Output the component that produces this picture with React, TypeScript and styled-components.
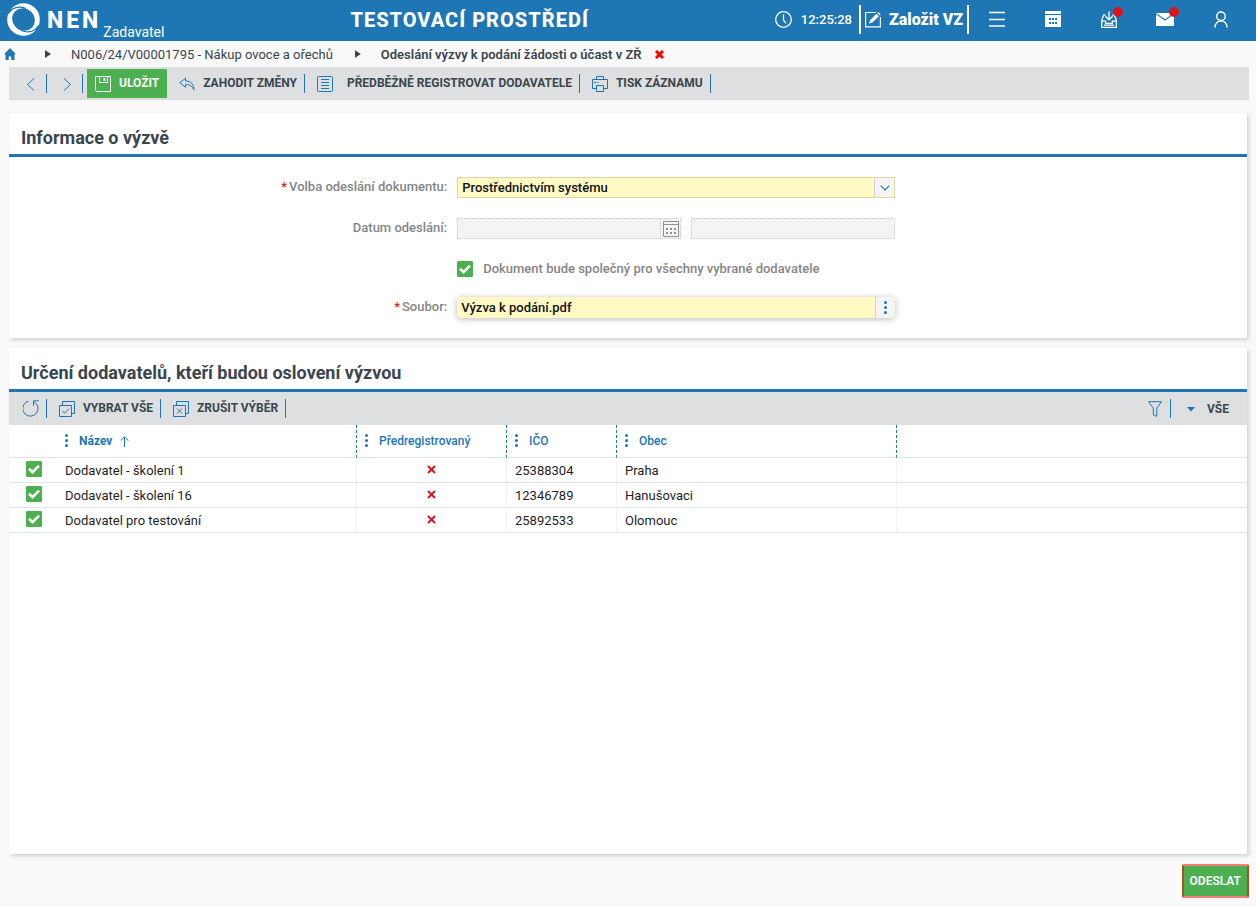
import React from "react";
import styled, { createGlobalStyle, css } from "styled-components";

const blue = "#1e76b5";
const ink = "#3a464e";
const green = "#4caf50";

const GlobalStyle = createGlobalStyle`
  * { box-sizing: border-box; }
  body { margin: 0; background: #f9f9f9; font-family: Roboto, "Liberation Sans", sans-serif; font-size: 13px; color: ${ink}; }
  button, input, select { font: inherit; color: inherit; }
  button { border: 0; background: none; padding: 0; cursor: pointer; }
  svg { display: block; flex: none; }
`;

const Page = styled.div`
  min-height: 100vh;
  display: flex;
  flex-direction: column;
`;

/* ---------- top bar ---------- */
const TopBar = styled.header`
  display: flex;
  align-items: center;
  height: 41px;
  padding: 0 7px;
  background: ${blue};
  color: #fff;
`;
const Brand = styled.a`
  display: flex;
  align-items: center;
  gap: 7px;
  height: 41px;
  padding-bottom: 3px;
  color: #fff;
  text-decoration: none;
`;
const BrandName = styled.span`
  font-size: 23px;
  line-height: 28px;
  font-weight: 800;
  letter-spacing: 3px;
  padding-top: 3px;
`;
const BrandRole = styled.span`
  align-self: flex-end;
  margin: 0 0 -3px -5px;
  font-size: 14px;
  line-height: 18px;
  font-weight: 400;
`;
const EnvTitle = styled.h1`
  flex: 1;
  margin: 0;
  padding-bottom: 2px;
  text-align: center;
  font-size: 20px;
  line-height: 24px;
  font-weight: 800;
  letter-spacing: 1px;
`;
const Clock = styled.div`
  display: flex;
  align-items: center;
  gap: 9px;
  padding: 0 7px 3px 0;
  font-weight: 500;
`;
const CreateButton = styled.button`
  display: flex;
  align-items: center;
  gap: 7px;
  height: 29px;
  margin-bottom: 2px;
  padding: 0 4px;
  border-left: 2px solid #fff;
  border-right: 2px solid #fff;
  font-size: 16px;
  font-weight: 900;
`;
const TopIcon = styled.button`
  position: relative;
  display: flex;
  align-items: center;
  justify-content: center;
  width: 56px;
  height: 38px;
  margin-bottom: 3px;
`;
const Badge = styled.span`
  position: absolute;
  top: 7px;
  right: 14px;
  width: 10px;
  height: 10px;
  border-radius: 50%;
  background: #d9161c;
`;

/* ---------- breadcrumbs ---------- */
const Crumbs = styled.nav`
  display: flex;
  align-items: center;
  height: 26px;
  padding: 0 4px;
  a { color: inherit; text-decoration: none; }
`;
const CrumbArrow = styled.span<{ $first?: boolean }>`
  width: 6px;
  height: 8px;
  margin: 0 20px 0 ${(p) => (p.$first ? 29 : 22)}px;
  background: ${ink};
  clip-path: polygon(0 0, 100% 50%, 0 100%);
`;
const CurrentCrumb = styled.span`
  font-weight: 600;
`;
const CloseCrumb = styled.button`
  margin-left: 13px;
`;

/* ---------- tool bars ---------- */
const Toolbar = styled.div<{ $page?: boolean }>`
  display: flex;
  align-items: center;
  height: 33px;
  padding-left: 2px;
  background: #dedfe0;
  ${(p) => p.$page && css`margin: 0 7px 13px 9px; box-shadow: inset 0 -1px #d8d9da;`}
`;
const ToolButton = styled.button<{ $gap?: number }>`
  display: flex;
  align-items: center;
  gap: ${(p) => p.$gap ?? 8}px;
  height: 29px;
  padding: 0 7px 0 12px;
  font-size: 12px;
  font-weight: 700;
  color: ${ink};
  svg { color: ${blue}; }
  span { padding-bottom: 2px; }
`;
const SaveButton = styled(ToolButton)`
  margin-left: 4px;
  padding: 0 8px;
  background: ${green};
  color: #fff;
  svg { color: #fff; }
`;
const Separator = styled.span`
  width: 1px;
  height: 19px;
  background: ${blue};
`;
const Spacer = styled.span`
  flex: 1;
`;
const ScopeButton = styled(ToolButton)`
  padding-right: 18px;
  span { padding-bottom: 0; }
`;

/* ---------- panels ---------- */
const Panel = styled.section<{ $grow?: boolean }>`
  margin: 0 9px 10px;
  background: #fff;
  box-shadow: 2px 2px 4px rgba(0, 0, 0, 0.16);
  ${(p) => p.$grow && css`flex: 1;`}
`;
const PanelTitle = styled.h2`
  margin: 0;
  padding: 13px 12px 4px;
  border-bottom: 3px solid ${blue};
  font-size: 18px;
  line-height: 24px;
  font-weight: 700;
`;

/* ---------- form ---------- */
const Form = styled.form`
  display: grid;
  grid-template-columns: 59fr 59fr 46fr;
  column-gap: 10px;
  row-gap: 20px;
  align-items: center;
  padding: 20px 0;
`;
const Label = styled.label`
  grid-column: 1;
  text-align: right;
  line-height: 18px;
  margin-bottom: 1px;
  font-weight: 500;
  color: #858585;
`;
const Required = styled.span`
  color: #e02020;
  margin-right: 2px;
`;
const Field = styled.div`
  grid-column: 2;
  display: flex;
`;
const SelectBox = styled(Field)`
  position: relative;
  height: 21px;
  border: 1px solid #dcd6a0;
  background: #fff9c4;
`;
const Select = styled.select`
  flex: 1;
  appearance: none;
  border: 0;
  padding: 0 24px 0 4px;
  background: transparent;
  font-weight: 500;
  color: #111;
`;
const SelectArrow = styled.span`
  position: absolute;
  top: 0;
  right: 0;
  bottom: 0;
  width: 20px;
  display: flex;
  align-items: center;
  justify-content: center;
  border-left: 1px solid #d0d4d8;
  background: #f4f4f4;
  color: ${blue};
  pointer-events: none;
`;
const DateFields = styled(Field)`
  gap: 10px;
`;
const DisabledBox = styled.div<{ $grow: number }>`
  flex: ${(p) => p.$grow} 1 0;
  min-width: 0;
  display: flex;
  height: 21px;
  border: 1px dotted #c8c8c8;
  background: #f4f4f4;
`;
const DisabledInput = styled.input`
  flex: 1;
  min-width: 0;
  border: 0;
  padding: 0 4px;
  background: transparent;
`;
const CalendarButton = styled.button`
  width: 20px;
  display: flex;
  align-items: center;
  justify-content: center;
  border-left: 1px dotted #c8c8c8;
  &:disabled { color: #909090; }
`;
const CheckField = styled(Field)`
  align-items: center;
  gap: 10px;
  height: 18px;
  padding-top: 2px;
  label { padding-bottom: 2px; font-weight: 500; color: #858585; }
`;
const FileBox = styled(Field)`
  height: 21px;
  border-radius: 4px;
  background: #fff9c4;
  box-shadow: 0 1px 6px rgba(0, 0, 0, 0.28);
  overflow: hidden;
`;
const FileInput = styled.input`
  flex: 1;
  min-width: 0;
  border: 0;
  padding: 0 4px;
  background: transparent;
  font-weight: 500;
  color: #111;
`;
const FileMenu = styled.button`
  width: 20px;
  display: flex;
  align-items: center;
  justify-content: center;
  border-left: 1px solid #d0d4d8;
  background: #f4f4f4;
  color: ${blue};
`;

/* ---------- tick box ---------- */
const TickWrap = styled.span`
  display: inline-grid;
  width: 16px;
  height: 16px;
  vertical-align: top;
  & > * { grid-area: 1 / 1; }
  svg { pointer-events: none; }
`;
const TickInput = styled.input`
  appearance: none;
  width: 16px;
  height: 16px;
  margin: 0;
  border-radius: 1px;
  border: 1px solid ${green};
  &:checked { background: ${green}; }
`;

/* ---------- table ---------- */
const Table = styled.table`
  width: 100%;
  table-layout: fixed;
  border-collapse: separate;
  border-spacing: 0;
  color: #1f1f1f;
`;
const HeadCell = styled.th<{ $line?: boolean; $bold?: boolean }>`
  height: 33px;
  padding: 0 8px 1px;
  text-align: left;
  font-size: 12px;
  font-weight: ${(p) => (p.$bold ? 700 : 500)};
  color: ${blue};
  border-bottom: 1px solid #dde7ea;
  border-right: ${(p) => (p.$line ? `1px dashed ${blue}` : 0)};
`;
const HeadLabel = styled.span`
  display: flex;
  align-items: center;
  svg:first-child { margin-right: 11px; }
  svg:last-child:not(:first-child) { margin: 2px 0 0 8px; }
`;
const Cell = styled.td<{ $line?: boolean; $center?: boolean }>`
  height: 25px;
  padding: 2px 8px 0;
  line-height: 22px;
  text-align: ${(p) => (p.$center ? "center" : "left")};
  border-bottom: 1px solid #dde7ea;
  border-right: ${(p) => (p.$line ? "1px dotted #dde7ea" : 0)};
  & > svg { margin: 0 auto 3px; }
`;
const CheckCell = styled(Cell)`
  padding: 3px 0 0 17px;
  line-height: 0;
  vertical-align: top;
`;

/* ---------- footer ---------- */
const Footer = styled.footer`
  display: flex;
  justify-content: flex-end;
  padding: 0 7px 9px;
`;
const SendButton = styled.button`
  height: 34px;
  padding: 0 6px 1px;
  border: 2px solid;
  border-color: #f87c7c #b0501f;
  border-radius: 2px;
  background: ${green};
  color: #fff;
  font-size: 12px;
  font-weight: 600;
`;

/* ---------- drawings ---------- */
const stroke = { fill: "none", stroke: "currentColor", strokeWidth: 1 } as const;

const Logo = () => (
  <svg width="33" height="33" viewBox="0 0 33 33" aria-hidden="true">
    <circle cx="16.5" cy="16.5" r="16.3" fill="#fff" />
    <ellipse cx="16.5" cy="16.5" rx="11.8" ry="10.8" transform="rotate(45 16.5 16.5)" fill={blue} />
    <path
      d="M1.2 10.5C5 4.8 11 2.6 19 5.4M31.8 22.5C28 28.2 22 30.4 14 27.6"
      fill="none"
      stroke={blue}
      strokeWidth="1.1"
    />
    <path d="M0 8L3.6 4.6L4.8 6.6L1.5 11ZM33 25L29.4 28.4L28.2 26.4L31.5 22Z" fill={blue} />
  </svg>
);
const ClockIcon = () => (
  <svg width="17" height="17" viewBox="0 0 17 17" {...stroke}>
    <circle cx="8.5" cy="8.5" r="7.8" strokeWidth="1.3" />
    <path d="M8.5 3.5V9L11 12.3" strokeWidth="1.3" />
  </svg>
);
const EditIcon = () => (
  <svg width="17" height="17" viewBox="0 0 17 17" {...stroke}>
    <path d="M11 1.5H.6V15.9H15.4V6" strokeWidth="1.2" />
    <path d="M4 12.5L5 9.2L11.5 2.7L14 5.2L7.4 11.6ZM12.3 1.9L13.3 1L15.7 3.4L14.8 4.4Z" fill="currentColor" stroke="none" />
  </svg>
);
const MenuIcon = () => (
  <svg width="16" height="16" viewBox="0 0 16 16" {...stroke}>
    <path d="M0 1.5H16M0 8.5H16M0 15H16" strokeWidth="1.6" />
  </svg>
);
const CalendarSolid = () => (
  <svg width="16" height="16" viewBox="0 0 16 16">
    <path d="M0 0H16V3H0ZM0 4H16V16H0Z" fill="#fff" />
    <path d="M4 7h2v2H4zM7 7h2v2H7zM10 7h2v2h-2zM4 11h2v2H4zM7 11h2v2H7zM10 11h2v2h-2z" fill={blue} />
  </svg>
);
const TrayIcon = () => (
  <svg width="16" height="17" viewBox="0 0 16 17" {...stroke} strokeWidth="1.3">
    <path d="M4.5 4H2.6L.7 9.5V16.3H15.3V9.5L13.4 4H11.5" />
    <path d="M.7 10.2H4.6V12.4H11.4V10.2H15.3M3 14.2H13M8 .5V8.5M4.4 5.2L8 8.8L11.6 5.2" />
  </svg>
);
const MailIcon = () => (
  <svg width="18" height="14" viewBox="0 0 18 14">
    <path d="M0 1H18V14H0Z" fill="#fff" />
    <path d="M0 1.6L9 8L18 1.6" fill="none" stroke={blue} strokeWidth="1.1" />
  </svg>
);
const UserIcon = () => (
  <svg width="14" height="17" viewBox="0 0 14 17" {...stroke} strokeWidth="1.5">
    <circle cx="7" cy="5.3" r="4.3" />
    <path d="M1 16.4C1.1 12.6 3.6 9.9 7 9.7C10.4 9.9 12.9 12.6 13 16.4" />
  </svg>
);
const HomeIcon = () => (
  <svg width="12" height="12" viewBox="0 0 12 12" fill={blue}>
    <path d="M6 0L12 6.2H10.5V12H7.3V8.5H4.7V12H1.5V6.2H0Z" />
  </svg>
);
const Cross = ({ size = 9, color = "#d9161c" }: { size?: number; color?: string }) => (
  <svg width={size} height={size} viewBox="0 0 9 9" fill="none" stroke={color} strokeWidth={color === "red" ? 3 : 2}>
    <path d="M1 1L8 8M8 1L1 8" />
  </svg>
);
const Chevron = ({ next }: { next?: boolean }) => (
  <svg width="16" height="16" viewBox="0 0 16 16" {...stroke}>
    <path d={next ? "M5 2.5L11.5 8.5L5 14.5" : "M11 2.5L4.5 8.5L11 14.5"} />
  </svg>
);
const SaveIcon = () => (
  <svg width="16" height="16" viewBox="0 0 16 16" {...stroke}>
    <path d="M.5 .5H15.5V15.5H1.8L.5 14.2ZM4.5 .5V6.5H12.5V.5" />
    <path d="M9.5 2v3" strokeWidth="2" />
  </svg>
);
const UndoIcon = () => (
  <svg width="16" height="16" viewBox="0 0 16 16" {...stroke}>
    <path d="M6.5 2.2L.8 6.7L6.5 11.2V8.5C10.5 8.4 13.3 10 14.8 13.7C15.3 9.3 12.5 5.2 6.5 4.9Z" />
  </svg>
);
const ListIcon = () => (
  <svg width="16" height="16" viewBox="0 0 16 16" {...stroke}>
    <rect x=".5" y=".5" width="15" height="15" rx="1" />
    <path d="M4 3.5H12M4 6.5H12M4 9.5H12M4 12.5H12" />
  </svg>
);
const PrintIcon = () => (
  <svg width="16" height="16" viewBox="0 0 16 16" {...stroke}>
    <path d="M4.5 3.5V.5H11.5V3.5M4.5 12.5H.5V3.5H15.5V12.5H11.5M4.5 9.5H11.5V15.5H4.5ZM2 6.5H4M5 6.5H6.5" />
  </svg>
);
const RefreshIcon = () => (
  <svg width="16" height="17" viewBox="0 0 16 17" {...stroke}>
    <path d="M5.5 1.2A7.6 7.6 0 1 0 13.6 4.2L10.6 1.2M10.5 6V.8H15.8" />
  </svg>
);
const StackIcon = ({ cross }: { cross?: boolean }) => (
  <svg width="16" height="16" viewBox="0 0 16 16" {...stroke}>
    <path d="M.5 4.5H12.5V15.5H.5ZM3.5 4V.5H15.5V12.5H13" />
    <path d={cross ? "M4 7.5L9 12.5M9 7.5L4 12.5" : "M3.3 9.8L5.6 12.2L10 7.7"} />
  </svg>
);
const FilterIcon = () => (
  <svg width="16" height="16" viewBox="0 0 16 16" {...stroke}>
    <path d="M1.5 .7H14.5L9.8 7.2V15.4L6.3 13.8V7.2Z" />
  </svg>
);
const DropIcon = () => (
  <svg width="16" height="16" viewBox="0 0 16 16" fill="currentColor">
    <path d="M4 6H12L8 10.5Z" />
  </svg>
);
const DownIcon = () => (
  <svg width="10" height="6" viewBox="0 0 10 6" {...stroke}>
    <path d="M.7 .7L5 5L9.3 .7" strokeWidth="1.2" />
  </svg>
);
const CalendarLine = () => (
  <svg width="16" height="16" viewBox="0 0 16 16" {...stroke}>
    <path d="M.5 .5H15.5V15.5H.5ZM.5 3.5H15.5" />
    <path d="M3 8h2M7 8h2M11 8h2M3 12h2M7 12h2M11 12h2" strokeWidth="2" />
  </svg>
);
const Dots = () => (
  <svg width="3" height="13" viewBox="0 0 3 13" fill="currentColor">
    <circle cx="1.5" cy="1.5" r="1.5" />
    <circle cx="1.5" cy="6.5" r="1.5" />
    <circle cx="1.5" cy="11.5" r="1.5" />
  </svg>
);
const SortIcon = () => (
  <svg width="9" height="11" viewBox="0 0 9 11" {...stroke}>
    <path d="M4.5 11V1M.7 4.6L4.5 .8L8.3 4.6" />
  </svg>
);

const Tick = (props: React.InputHTMLAttributes<HTMLInputElement>) => (
  <TickWrap>
    <TickInput type="checkbox" defaultChecked {...props} />
    <svg width="16" height="16" viewBox="0 0 16 16" fill="none" stroke="#fff" strokeWidth="2.6">
      <path d="M3 7.8L6.6 11.2L13 4.6" />
    </svg>
  </TickWrap>
);

const suppliers = [
  { name: "Dodavatel - školení 1", ico: "25388304", city: "Praha" },
  { name: "Dodavatel - školení 16", ico: "12346789", city: "Hanušovaci" },
  { name: "Dodavatel pro testování", ico: "25892533", city: "Olomouc" },
];

export default function App() {
  return (
    <Page>
      <GlobalStyle />
      <TopBar>
        <Brand href="#">
          <Logo />
          <BrandName>NEN</BrandName>
          <BrandRole>Zadavatel</BrandRole>
        </Brand>
        <EnvTitle>TESTOVACÍ PROSTŘEDÍ</EnvTitle>
        <Clock><ClockIcon /><time>12:25:28</time></Clock>
        <CreateButton><EditIcon />Založit VZ</CreateButton>
        <TopIcon aria-label="Menu"><MenuIcon /></TopIcon>
        <TopIcon aria-label="Kalendář"><CalendarSolid /></TopIcon>
        <TopIcon aria-label="Doručené"><TrayIcon /><Badge /></TopIcon>
        <TopIcon aria-label="Zprávy"><MailIcon /><Badge /></TopIcon>
        <TopIcon aria-label="Uživatel"><UserIcon /></TopIcon>
      </TopBar>

      <Crumbs>
        <a href="#" aria-label="Domů"><HomeIcon /></a>
        <CrumbArrow $first />
        <a href="#">N006/24/V00001795 - Nákup ovoce a ořechů</a>
        <CrumbArrow />
        <CurrentCrumb>Odeslání výzvy k podání žádosti o účast v ZŘ</CurrentCrumb>
        <CloseCrumb aria-label="Zavřít"><Cross color="red" /></CloseCrumb>
      </Crumbs>

      <Toolbar $page>
        <ToolButton aria-label="Předchozí"><Chevron /></ToolButton>
        <Separator />
        <ToolButton aria-label="Další"><Chevron next /></ToolButton>
        <Separator />
        <SaveButton><SaveIcon /><span>ULOŽIT</span></SaveButton>
        <ToolButton><UndoIcon /><span>ZAHODIT ZMĚNY</span></ToolButton>
        <Separator />
        <ToolButton $gap={14}><ListIcon /><span>PŘEDBĚŽNĚ REGISTROVAT DODAVATELE</span></ToolButton>
        <Separator />
        <ToolButton><PrintIcon /><span>TISK ZÁZNAMU</span></ToolButton>
        <Separator />
      </Toolbar>

      <Panel>
        <PanelTitle>Informace o výzvě</PanelTitle>
        <Form>
          <Label htmlFor="mode"><Required>*</Required>Volba odeslání dokumentu:</Label>
          <SelectBox>
            <Select id="mode"><option>Prostřednictvím systému</option></Select>
            <SelectArrow><DownIcon /></SelectArrow>
          </SelectBox>
          <Label htmlFor="sent">Datum odeslání:</Label>
          <DateFields>
            <DisabledBox $grow={11}>
              <DisabledInput id="sent" disabled />
              <CalendarButton type="button" disabled aria-label="Vybrat datum"><CalendarLine /></CalendarButton>
            </DisabledBox>
            <DisabledBox $grow={10}><DisabledInput disabled aria-label="Čas odeslání" /></DisabledBox>
          </DateFields>
          <CheckField>
            <Tick id="shared" />
            <label htmlFor="shared">Dokument bude společný pro všechny vybrané dodavatele</label>
          </CheckField>
          <Label htmlFor="file"><Required>*</Required>Soubor:</Label>
          <FileBox>
            <FileInput id="file" defaultValue="Výzva k podání.pdf" />
            <FileMenu type="button" aria-label="Možnosti souboru"><Dots /></FileMenu>
          </FileBox>
        </Form>
      </Panel>

      <Panel $grow>
        <PanelTitle>Určení dodavatelů, kteří budou oslovení výzvou</PanelTitle>
        <Toolbar>
          <ToolButton aria-label="Obnovit"><RefreshIcon /></ToolButton>
          <Separator />
          <ToolButton><StackIcon /><span>VYBRAT VŠE</span></ToolButton>
          <Separator />
          <ToolButton><StackIcon cross /><span>ZRUŠIT VÝBĚR</span></ToolButton>
          <Separator />
          <Spacer />
          <ToolButton aria-label="Filtr"><FilterIcon /></ToolButton>
          <Separator />
          <ScopeButton><DropIcon /><span>VŠE</span></ScopeButton>
        </Toolbar>
        <Table>
          <colgroup>
            <col width="48" />
            <col width="300" />
            <col width="150" />
            <col width="110" />
            <col width="280" />
            <col />
          </colgroup>
          <thead>
            <tr>
              <HeadCell />
              <HeadCell $line $bold><HeadLabel><Dots />Název<SortIcon /></HeadLabel></HeadCell>
              <HeadCell $line><HeadLabel><Dots />Předregistrovaný</HeadLabel></HeadCell>
              <HeadCell $line><HeadLabel><Dots />IČO</HeadLabel></HeadCell>
              <HeadCell $line><HeadLabel><Dots />Obec</HeadLabel></HeadCell>
              <HeadCell />
            </tr>
          </thead>
          <tbody>
            {suppliers.map((s) => (
              <tr key={s.ico}>
                <CheckCell><Tick aria-label={s.name} /></CheckCell>
                <Cell $line>{s.name}</Cell>
                <Cell $line $center><Cross /></Cell>
                <Cell $line>{s.ico}</Cell>
                <Cell $line>{s.city}</Cell>
                <Cell />
              </tr>
            ))}
          </tbody>
        </Table>
      </Panel>

      <Footer><SendButton>ODESLAT</SendButton></Footer>
    </Page>
  );
}
